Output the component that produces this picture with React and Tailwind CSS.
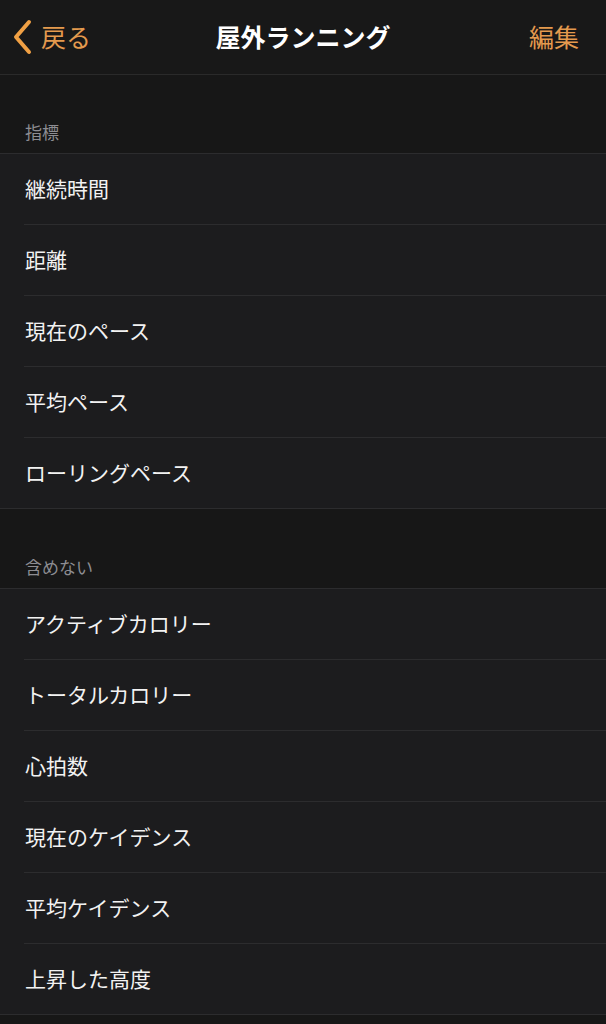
import React from 'react'

const font = { fontFamily: '"Noto Sans CJK JP", "Noto Sans", sans-serif' }

const groups = [
  { title: '指標', gap: 'h-[78px]', items: ['継続時間', '距離', '現在のペース', '平均ペース', 'ローリングペース'] },
  {
    title: '含めない',
    gap: 'h-[79px]',
    items: ['アクティブカロリー', 'トータルカロリー', '心拍数', '現在のケイデンス', '平均ケイデンス', '上昇した高度'],
  },
]

const Section = ({ title, gap, items }) => (
  <section>
    <div className={`${gap} flex items-end pb-[13px] px-[25px]`}>
      <span className="text-[17px] leading-none text-[#8d8d92]">{title}</span>
    </div>
    <ul className="bg-[#1c1c1e] border-y border-[#2c2c2e]">
      {items.map((item, i) => (
        <li key={item} className="pl-[24px]">
          <div
            className={`flex items-center text-[21px] text-[#f2f2f2] ${
              i < items.length - 1 ? 'h-[71px] border-b border-[#2c2c2e]' : 'h-[70px]'
            }`}
          >
            <span className="pl-[1px]">{item}</span>
          </div>
        </li>
      ))}
    </ul>
  </section>
)

export default function App() {
  return (
    <div className="min-h-[1024px] bg-[#171717] overflow-hidden" style={font}>
      {/* Nav bar */}
      <nav className="h-[75px] bg-[#181818] border-b border-[#2a2a2a] flex items-center justify-between px-[13px] relative">
        <button className="flex items-center gap-[9px] text-[#e49a4e] text-[25px]">
          <svg width="19" height="36" viewBox="0 0 19 36" fill="none">
            <path d="M16 3L3 18l13 15" stroke="#f0a044" strokeWidth="4" strokeLinecap="round" strokeLinejoin="round" />
          </svg>
          <span className="leading-none -mt-[2px]">戻る</span>
        </button>
        <h1 className="absolute left-1/2 -translate-x-1/2 text-[25px] font-bold text-white leading-none -mt-[2px]">
          屋外ランニング
        </h1>
        <button className="text-[#e49a4e] text-[25px] leading-none pr-[14px] -mt-[2px]">編集</button>
      </nav>

      {groups.map((g) => (
        <Section key={g.title} {...g} />
      ))}
    </div>
  )
}
